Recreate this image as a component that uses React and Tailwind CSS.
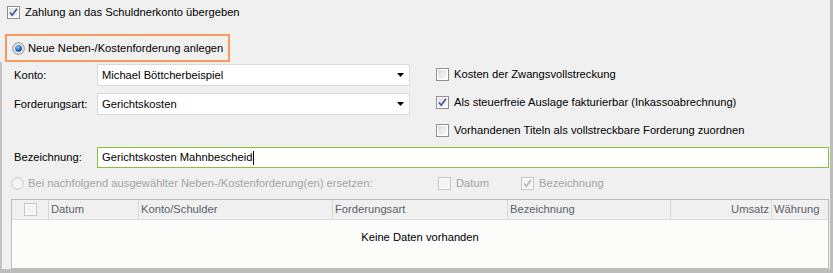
import React from "react";

const font = { fontFamily: '"Liberation Sans", Arial, sans-serif' };

const Check = ({ checked = false, disabled = false }) => (
  <svg width="13" height="13" viewBox="0 0 13 13" className="shrink-0">
    <defs>
      <linearGradient id={disabled ? "cbd" : "cb"} x1="0" y1="0" x2="1" y2="1">
        <stop offset="0" stopColor={disabled ? "#f4f4f4" : "#dcdcdc"} />
        <stop offset="1" stopColor={disabled ? "#f4f4f4" : "#fbfbfb"} />
      </linearGradient>
    </defs>
    <rect x="0.5" y="0.5" width="12" height="12" fill="#fff" stroke={disabled ? "#c4c4c4" : "#8e8f8f"} />
    <rect x="2" y="2" width="9" height="9" fill={`url(#${disabled ? "cbd" : "cb"})`} />
    {checked && (
      <path
        d="M3 6.5 L5.2 9.2 L10 2.8"
        fill="none"
        stroke={disabled ? "#b4b4b4" : "#3d4f9e"}
        strokeWidth="1.6"
      />
    )}
  </svg>
);

const Radio = ({ checked = false, disabled = false }) => (
  <svg width="13" height="13" viewBox="0 0 13 13" className="shrink-0">
    <defs>
      <radialGradient id="rdot" cx="0.4" cy="0.35" r="0.7">
        <stop offset="0" stopColor="#9fd6ff" />
        <stop offset="0.5" stopColor="#2a7ad0" />
        <stop offset="1" stopColor="#0b3c80" />
      </radialGradient>
    </defs>
    <circle cx="6.5" cy="6.5" r="5.8" fill={disabled ? "#f4f4f4" : "#e6e6e6"} stroke={disabled ? "#c8c8c8" : "#8c8c8c"} />
    {checked && <circle cx="6.5" cy="6.5" r="3.3" fill="url(#rdot)" />}
  </svg>
);

const Select = ({ value }) => (
  <div className="flex items-center w-[313px] h-[22px] bg-white border border-[#dadada] pl-[4px] pr-[5px]">
    <span className="flex-1 text-black">{value}</span>
    <svg width="7" height="4" viewBox="0 0 7 4">
      <path d="M0 0 H7 L3.5 4 Z" fill="#000" />
    </svg>
  </div>
);

const CheckRow = ({ label, checked }) => (
  <div className="flex items-center gap-[5px] h-[13px]">
    <Check checked={checked} />
    <span className="text-black">{label}</span>
  </div>
);

export default function App() {
  return (
    <div
      style={font}
      className="w-[833px] h-[273px] bg-[#f0f0f0] border-r-[3px] border-b-[4px] border-[#bcbcbc] flex flex-col overflow-hidden text-[11.2px] whitespace-nowrap"
    >
      <div className="flex items-center gap-[5px] h-[13px] mt-[6px] pl-[7px]">
        <Check checked />
        <span className="text-black">Zahlung an das Schuldnerkonto übergeben</span>
      </div>

      <div className="ml-[5px] mt-[15px] w-[225px] h-[28px] border-2 border-[#f79a5a] flex items-center gap-[3px] pl-[5px]">
        <Radio checked />
        <span className="text-black">Neue Neben-/Kostenforderung anlegen</span>
      </div>

      <div className="flex-1 flex flex-col border-l-2 border-[#c4c4c4]">
        <div className="flex h-[78px]">
          <div className="flex flex-col gap-[7px] pt-[2px]">
            <div className="flex items-center">
              <span className="w-[95px] pl-[12px] text-black">Konto:</span>
              <Select value="Michael Böttcherbeispiel" />
            </div>
            <div className="flex items-center">
              <span className="w-[95px] pl-[12px] text-black">Forderungsart:</span>
              <Select value="Gerichtskosten" />
            </div>
          </div>
          <div className="flex flex-col gap-[15px] pt-[6px] ml-[26px]">
            <CheckRow label="Kosten der Zwangsvollstreckung" />
            <CheckRow label="Als steuerfreie Auslage fakturierbar (Inkassoabrechnung)" checked />
            <CheckRow label="Vorhandenen Titeln als vollstreckbare Forderung zuordnen" />
          </div>
        </div>

        <div className="flex items-center mt-[7px]">
          <span className="w-[95px] pl-[12px] text-black">Bezeichnung:</span>
          <div className="flex items-center w-[732px] h-[21px] bg-white border border-[#8cc03c] pl-[4px]">
            <span className="text-black">Gerichtskosten Mahnbescheid</span>
            <span className="w-px h-[14px] bg-black" />
          </div>
        </div>

        <div className="flex items-center h-[13px] mt-[9px]">
          <div className="flex items-center gap-[4px] w-[436px] pl-[9px]">
            <Radio disabled />
            <span className="text-[#a3a3a3]">
              Bei nachfolgend ausgewählter Neben-/Kostenforderung(en) ersetzen:
            </span>
          </div>
          <div className="flex items-center gap-[5px] w-[83px]">
            <Check disabled />
            <span className="text-[#a3a3a3]">Datum</span>
          </div>
          <div className="flex items-center gap-[5px]">
            <Check checked disabled />
            <span className="text-[#a3a3a3]">Bezeichnung</span>
          </div>
        </div>

        <div className="ml-[9px] mt-[9px] w-[818px] flex-1 border border-[#bdbdbd] flex flex-col">
          <div className="flex h-[20px] border-b border-[#dcdcdc] text-[#5b5f6e]">
            <div className="w-[37px] flex items-center justify-center border-r border-[#d8d8d8]">
              <Check disabled />
            </div>
            <div className="w-[90px] flex items-center pl-[2px] border-r border-[#d8d8d8]">Datum</div>
            <div className="w-[194px] flex items-center pl-[2px] border-r border-[#d8d8d8]">Konto/Schulder</div>
            <div className="w-[175px] flex items-center pl-[2px] border-r border-[#d8d8d8]">Forderungsart</div>
            <div className="w-[163px] flex items-center pl-[2px] border-r border-[#d8d8d8]">Bezeichnung</div>
            <div className="w-[101px] flex items-center justify-end pr-[2px] border-r border-[#d8d8d8]">Umsatz</div>
            <div className="flex-1 flex items-center pl-[2px]">Währung</div>
          </div>
          <div className="flex-1 bg-[#fcfcfa] flex justify-center pt-[9px]">
            <span className="text-black">Keine Daten vorhanden</span>
          </div>
        </div>
      </div>
    </div>
  );
}
